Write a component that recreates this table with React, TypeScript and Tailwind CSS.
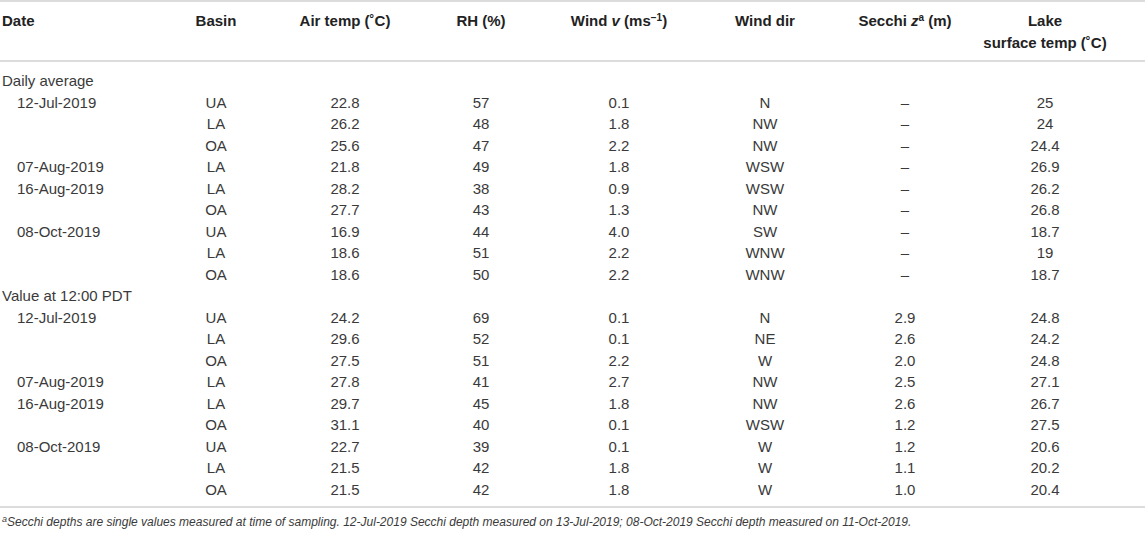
const cols = "grid grid-cols-[160px_112px_146px_126px_150px_142px_138px_142px]";

type Row = [string, string, string, string, string, string, string, string];

const daily: Row[] = [
  ["12-Jul-2019", "UA", "22.8", "57", "0.1", "N", "–", "25"],
  ["", "LA", "26.2", "48", "1.8", "NW", "–", "24"],
  ["", "OA", "25.6", "47", "2.2", "NW", "–", "24.4"],
  ["07-Aug-2019", "LA", "21.8", "49", "1.8", "WSW", "–", "26.9"],
  ["16-Aug-2019", "LA", "28.2", "38", "0.9", "WSW", "–", "26.2"],
  ["", "OA", "27.7", "43", "1.3", "NW", "–", "26.8"],
  ["08-Oct-2019", "UA", "16.9", "44", "4.0", "SW", "–", "18.7"],
  ["", "LA", "18.6", "51", "2.2", "WNW", "–", "19"],
  ["", "OA", "18.6", "50", "2.2", "WNW", "–", "18.7"],
];

const noon: Row[] = [
  ["12-Jul-2019", "UA", "24.2", "69", "0.1", "N", "2.9", "24.8"],
  ["", "LA", "29.6", "52", "0.1", "NE", "2.6", "24.2"],
  ["", "OA", "27.5", "51", "2.2", "W", "2.0", "24.8"],
  ["07-Aug-2019", "LA", "27.8", "41", "2.7", "NW", "2.5", "27.1"],
  ["16-Aug-2019", "LA", "29.7", "45", "1.8", "NW", "2.6", "26.7"],
  ["", "OA", "31.1", "40", "0.1", "WSW", "1.2", "27.5"],
  ["08-Oct-2019", "UA", "22.7", "39", "0.1", "W", "1.2", "20.6"],
  ["", "LA", "21.5", "42", "1.8", "W", "1.1", "20.2"],
  ["", "OA", "21.5", "42", "1.8", "W", "1.0", "20.4"],
];

const DataRow = ({ row }: { row: Row }) => (
  <div className={cols}>
    <div className="pl-[17px]">{row[0]}</div>
    {row.slice(1).map((cell, i) => (
      <div key={i} className="text-center">
        {cell}
      </div>
    ))}
  </div>
);

const Section = ({ title, rows }: { title: string; rows: Row[] }) => (
  <>
    <div className="pl-[2px]">{title}</div>
    {rows.map((row, i) => (
      <DataRow key={i} row={row} />
    ))}
  </>
);

export default function App() {
  return (
    <div
      className="w-[1145px] h-[533px] bg-white text-[#3a3a3a] text-[15px] leading-[21.5px]"
      style={{ fontFamily: '"Liberation Sans", Arial, sans-serif' }}
    >
      <div className="border-t-2 border-b-2 border-[#dcdcdc] pt-[8px] pb-[7px] font-bold text-[#222]">
        <div className={cols}>
          <div className="pl-[2px]">Date</div>
          <div className="text-center">Basin</div>
          <div className="text-center">Air temp (˚C)</div>
          <div className="text-center">RH (%)</div>
          <div className="text-center">
            Wind <i>v</i> (ms<sup className="text-[10px]">−1</sup>)
          </div>
          <div className="text-center">Wind dir</div>
          <div className="text-center">
            Secchi <i>z</i>
            <sup className="text-[10px]">a</sup> (m)
          </div>
          <div className="text-center">
            Lake
            <br />
            surface temp (˚C)
          </div>
        </div>
      </div>

      <div className="pt-[8px] pb-[6px] border-b-2 border-[#dcdcdc]">
        <Section title="Daily average" rows={daily} />
        <Section title="Value at 12:00 PDT" rows={noon} />
      </div>

      <p className="pl-[2px] pt-[6px] italic text-[12px] leading-[16px]">
        <sup className="text-[9px]">a</sup>Secchi depths are single values measured at time of
        sampling. 12-Jul-2019 Secchi depth measured on 13-Jul-2019; 08-Oct-2019 Secchi depth
        measured on 11-Oct-2019.
      </p>
    </div>
  );
}
